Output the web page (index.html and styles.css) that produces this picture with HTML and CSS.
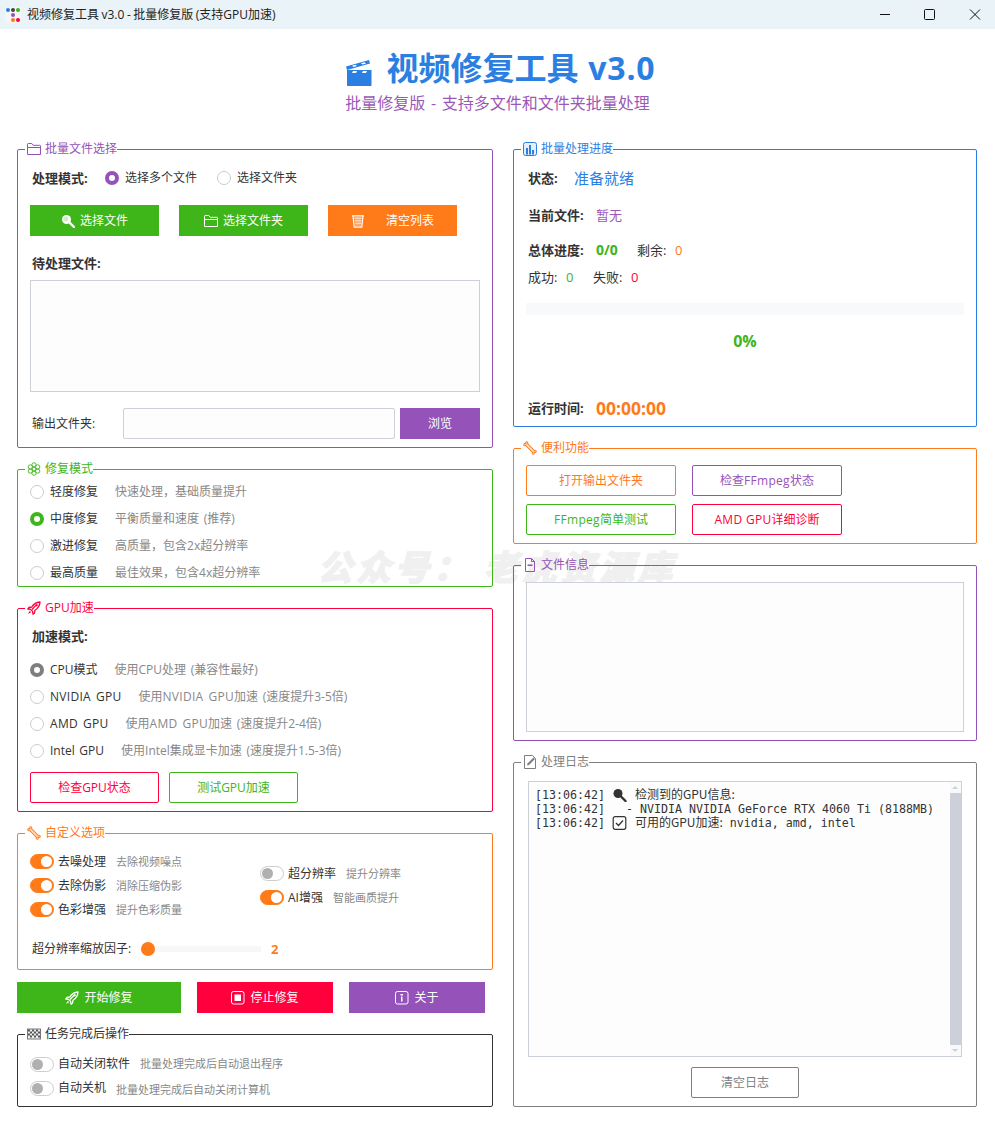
FILE: index.html
```html
<!DOCTYPE html>
<html lang="zh-CN">
<head>
<meta charset="utf-8">
<title>视频修复工具 v3.0</title>
<link rel="stylesheet" href="styles.css">
</head>
<body>
<svg class="sprite" aria-hidden="true">
  <symbol id="i-folder" viewBox="0 0 14 14"><path d="M.5 12.500V2.200c0-.4.3-.7.7-.7h3.600l1.400 1.800h6.600c.4 0 .7.3.7.7v8.500zM.5 5.500h13" fill="none" stroke="currentColor"/></symbol>
  <symbol id="i-chart" viewBox="0 0 14 14"><rect x=".5" y=".5" width="13" height="13" rx="2" fill="currentColor" fill-opacity=".12" stroke="currentColor"/><path d="M3 6h2v6.500H3zM6 3h2v9.500H6zM9 8h2v4.500H9z" fill="currentColor"/></symbol>
  <symbol id="i-wrench" viewBox="0 0 14 14"><g fill="currentColor"><circle cx="1.900" cy="3.700" r="1.600"/><circle cx="3.700" cy="1.900" r="1.600"/><circle cx="10.300" cy="12.100" r="1.600"/><circle cx="12.100" cy="10.300" r="1.600"/></g><path d="M2.800 2.800 11.200 11.200" stroke="currentColor" stroke-width="3.600"/><g fill="#fff" fill-opacity=".8"><circle cx="2" cy="3.700" r=".7"/><circle cx="3.700" cy="2" r=".7"/><circle cx="10.300" cy="12" r=".7"/><circle cx="12" cy="10.300" r=".7"/></g><path d="M3.400 3.400 10.600 10.600" stroke="#fff" stroke-width="1.500" stroke-opacity=".8"/></symbol>
  <symbol id="i-gear" viewBox="0 0 14 14"><g fill="none" stroke="currentColor" stroke-width=".9"><circle cx="7" cy="7" r="1.900"/><circle cx="7" cy="2.800" r="2.100"/><circle cx="7" cy="11.200" r="2.100"/><circle cx="3.300" cy="4.900" r="2.100"/><circle cx="10.700" cy="4.900" r="2.100"/><circle cx="3.300" cy="9.100" r="2.100"/><circle cx="10.700" cy="9.100" r="2.100"/></g></symbol>
  <symbol id="i-rocket" viewBox="0 0 14 14"><path d="M13 1C9.500 1.200 6.800 2.800 4.800 6L2 6.500.8 8l2.800.4 2 2 .4 2.800 1.500-1.200.5-2.800C11.200 7.200 12.800 4.500 13 1z" fill="none" stroke="currentColor" stroke-width="1.300" stroke-linejoin="round"/><path d="M4.500 8 9 3.500l1.500 0-5 5.500z" fill="currentColor"/><circle cx="9.700" cy="4.300" r="1.100" fill="currentColor"/><path d="M2.800 9.800 1 13l3.200-1.800z" fill="currentColor"/></symbol>
  <symbol id="i-doc" viewBox="0 0 14 14"><path d="M2.500.5h6l3 3v10h-9zM8.500.5v3h3" fill="none" stroke="currentColor"/><path d="M4.500 6.500h5v1.500h-5z" fill="currentColor"/></symbol>
  <symbol id="i-memo" viewBox="0 0 14 14"><path d="M1.500 13.500V.5h8l3 3v10z" fill="none" stroke="currentColor"/><path d="M4 10.500l.5-2 6-6 1.500 1.500-6 6z" fill="currentColor"/></symbol>
  <symbol id="i-flag" viewBox="0 0 14 14"><rect x=".5" y="2" width="13" height="10" fill="#eee" stroke="#777"/><path d="M1 2.500h2v2H1zM5 2.500h2v2H5zM9 2.500h2v2H9zM3 4.500h2v2H3zM7 4.500h2v2H7zM11 4.500h2v2h-2zM1 6.500h2v2H1zM5 6.500h2v2H5zM9 6.500h2v2H9zM3 8.500h2v2H3zM7 8.500h2v2H7zM11 8.500h2v2h-2z" fill="#555"/></symbol>
  <symbol id="i-search" viewBox="0 0 14 14"><circle cx="5.500" cy="5.500" r="4.500" fill="currentColor"/><circle cx="5" cy="5" r="2.400" fill="currentColor" fill-opacity=".45"/><path d="M8.500 8.500 13 13" stroke="currentColor" stroke-width="2.400" stroke-linecap="round"/></symbol>
  <symbol id="i-lens" viewBox="0 0 14 14"><circle cx="5.500" cy="5.500" r="4.500" fill="#fff"/><circle cx="5" cy="5" r="2.400" fill="#cfeec4"/><path d="M8.500 8.500 13 13" stroke="#fff" stroke-width="2.400" stroke-linecap="round"/></symbol>
  <symbol id="i-trash" viewBox="0 0 14 14"><path d="M1 1.800h12M2 1.800l1.200 11.400h7.600L12 1.800" fill="none" stroke="currentColor" stroke-width="1.200"/><path d="M3 4.300h8M3.300 6.800h7.400M3.500 9.300h7M5 3v9.500M7 3v9.500M9 3v9.500" stroke="currentColor" stroke-width=".7"/></symbol>
  <symbol id="i-stop" viewBox="0 0 14 14"><rect x=".5" y=".5" width="12.500" height="12.500" rx="2" fill="none" stroke="currentColor"/><rect x="3.500" y="3.500" width="6.500" height="6.500" fill="currentColor"/></symbol>
  <symbol id="i-info" viewBox="0 0 14 14"><rect x=".5" y=".5" width="12.500" height="12.500" rx="2" fill="none" stroke="currentColor"/><path d="M5.500 3h2.500v1.500H5.500zM6 5.500h1.500v5H6z" fill="currentColor"/></symbol>
  <symbol id="i-check" viewBox="0 0 14 14"><rect x=".7" y=".7" width="12.600" height="12.600" rx="2" fill="none" stroke="#333" stroke-width="1.200"/><path d="M3.500 7l2.500 2.500 4.500-5" fill="none" stroke="#333" stroke-width="1.300"/></symbol>
</svg>

<header class="titlebar">
  <svg class="app-icon" viewBox="0 0 16 16"><rect width="16" height="16" rx="1" fill="#f4f6f8"/><circle cx="3" cy="3" r="2" fill="#2b7fe3"/><circle cx="8" cy="3" r="2" fill="#444"/><circle cx="13" cy="3" r="2" fill="#3eb518"/><circle cx="8" cy="8" r="2" fill="#9553b9"/><circle cx="8" cy="13" r="2" fill="#ff7a18"/><circle cx="13" cy="13" r="2" fill="#ff003c"/></svg>
  <span class="title-text">视频修复工具 v3.0 - 批量修复版 (支持GPU加速)</span>
  <div class="win-controls">
    <svg class="win-btn min" viewBox="0 0 12 12"><path d="M0 5.500h10" stroke="#111" fill="none"/></svg>
    <svg class="win-btn" viewBox="0 0 12 12"><rect x=".5" y=".5" width="10" height="10" rx="1" stroke="#111" fill="none"/></svg>
    <svg class="win-btn" viewBox="0 0 12 12"><path d="M1 .5l10 10M11 .5 1 10.500" stroke="#111" fill="none"/></svg>
  </div>
</header>

<div class="hero">
  <h1 class="hero-title">
    <svg class="clapper" viewBox="0 0 26 26"><path d="M1 10h24.500v15c0 .6-.4 1-1 1H2c-.6 0-1-.4-1-1z" fill="#2b7fe3"/><path d="M7 11h4l-1 2H6zM17 11h4l-1 2h-4z" fill="#fff"/><path d="M0 6.500 23 0l1 3.500L1 10z" fill="#2b7fe3"/><path d="M6 5.800 9.500 4.800 11 6l-3.500 1zM15 3.300 18.500 2.300 20 3.500l-3.500 1z" fill="#fff"/></svg>
    <span>视频修复工具 <span class="ver">v3.0</span></span>
  </h1>
  <p class="hero-sub">批量修复版 - 支持多文件和文件夹批量处理</p>
</div>

<main class="columns">
  <div class="col">
    <fieldset class="box purple box-files">
      <legend><svg class="lg-icon"><use href="#i-folder"/></svg>批量文件选择</legend>
      <div class="row mode-row">
        <b class="strong">处理模式:</b>
        <label class="radio-item"><i class="radio on-purple"></i>选择多个文件</label>
        <label class="radio-item"><i class="radio"></i>选择文件夹</label>
      </div>
      <div class="row btn-row">
        <button class="btn solid green"><svg class="b-icon"><use href="#i-lens"/></svg>选择文件</button>
        <button class="btn solid green"><svg class="b-icon"><use href="#i-folder"/></svg>选择文件夹</button>
        <button class="btn solid orange wide-icon"><svg class="b-icon"><use href="#i-trash"/></svg>清空列表</button>
      </div>
      <div class="strong pending">待处理文件:</div>
      <div class="area area-files"></div>
      <div class="row out-row">
        <span class="out-label">输出文件夹:</span>
        <div class="input"></div>
        <button class="btn solid purple-bg browse">浏览</button>
      </div>
    </fieldset>

    <fieldset class="box green-line box-mode">
      <legend><svg class="lg-icon"><use href="#i-gear"/></svg>修复模式</legend>
      <div class="opt"><i class="radio"></i><span>轻度修复</span><em>快速处理，基础质量提升</em></div>
      <div class="opt"><i class="radio on-green"></i><span>中度修复</span><em>平衡质量和速度 (推荐)</em></div>
      <div class="opt"><i class="radio"></i><span>激进修复</span><em>高质量，包含2x超分辨率</em></div>
      <div class="opt"><i class="radio"></i><span>最高质量</span><em>最佳效果，包含4x超分辨率</em></div>
    </fieldset>

    <fieldset class="box red-line box-gpu">
      <legend><svg class="lg-icon"><use href="#i-rocket"/></svg><span>GPU加速</span></legend>
      <div class="strong gpu-head">加速模式:</div>
      <div class="gpu-list">
        <div class="opt"><i class="radio on-gray"></i><span>CPU模式</span><em>使用CPU处理 (兼容性最好)</em></div>
        <div class="opt"><i class="radio"></i><span class="lat">NVIDIA GPU</span><em>使用<span class="lat">NVIDIA GPU</span>加速 (速度提升3-5倍)</em></div>
        <div class="opt"><i class="radio"></i><span class="lat">AMD GPU</span><em>使用<span class="lat">AMD GPU</span>加速 (速度提升2-4倍)</em></div>
        <div class="opt"><i class="radio"></i><span>Intel GPU</span><em>使用Intel集成显卡加速 (速度提升1.5-3倍)</em></div>
      </div>
      <div class="row gpu-btns">
        <button class="btn line red-line">检查GPU状态</button>
        <button class="btn line green-line">测试GPU加速</button>
      </div>
    </fieldset>

    <fieldset class="box orange-line box-custom">
      <legend><svg class="lg-icon"><use href="#i-wrench"/></svg>自定义选项</legend>
      <div class="custom-grid">
        <div class="tg-col">
          <div class="tg"><i class="toggle on"></i><span>去噪处理</span><em>去除视频噪点</em></div>
          <div class="tg"><i class="toggle on"></i><span>去除伪影</span><em>消除压缩伪影</em></div>
          <div class="tg"><i class="toggle on"></i><span>色彩增强</span><em>提升色彩质量</em></div>
        </div>
        <div class="tg-col tg-center">
          <div class="tg"><i class="toggle"></i><span>超分辨率</span><em>提升分辨率</em></div>
          <div class="tg"><i class="toggle on"></i><span>AI增强</span><em>智能画质提升</em></div>
        </div>
      </div>
      <div class="row slider-row">
        <span class="slider-label">超分辨率缩放因子:</span>
        <div class="slider"><i class="thumb"></i></div>
        <b class="slider-val">2</b>
      </div>
    </fieldset>

    <div class="actions">
      <button class="btn solid green act-start"><svg class="b-icon"><use href="#i-rocket"/></svg>开始修复</button>
      <button class="btn solid red act"><svg class="b-icon"><use href="#i-stop"/></svg>停止修复</button>
      <button class="btn solid purple-bg act"><svg class="b-icon"><use href="#i-info"/></svg>关于</button>
    </div>

    <fieldset class="box dark box-after">
      <legend><svg class="lg-icon"><use href="#i-flag"/></svg>任务完成后操作</legend>
      <div class="tg"><i class="toggle"></i><span>自动关闭软件</span><em>批量处理完成后自动退出程序</em></div>
      <div class="tg"><i class="toggle"></i><span>自动关机</span><em>批量处理完成后自动关闭计算机</em></div>
    </fieldset>
  </div>

  <div class="col">
    <fieldset class="box blue box-progress">
      <legend><svg class="lg-icon"><use href="#i-chart"/></svg>批量处理进度</legend>
      <div class="row p-status"><b class="strong">状态:</b><span class="status-val">准备就绪</span></div>
      <div class="row p-file"><b class="strong">当前文件:</b><span class="file-val">暂无</span></div>
      <div class="row p-total"><b class="strong">总体进度:</b><b class="total-val">0/0</b><span class="left-label">剩余:</span><span class="left-val">0</span></div>
      <div class="row p-done"><span>成功:</span><span class="ok-val">0</span><span class="fail-label">失败:</span><span class="fail-val">0</span></div>
      <div class="track"></div>
      <div class="percent">0%</div>
      <div class="row p-time"><b class="strong">运行时间:</b><b class="time-val">00:00:00</b></div>
    </fieldset>

    <fieldset class="box orange-line box-tools">
      <legend><svg class="lg-icon"><use href="#i-wrench"/></svg>便利功能</legend>
      <div class="tools-grid">
        <button class="btn line orange-line">打开输出文件夹</button>
        <button class="btn line purple"><span>检查<span class="lat">FFmpeg</span>状态</span></button>
        <button class="btn line green-line"><span><span class="lat">FFmpeg</span>简单测试</span></button>
        <button class="btn line red-line"><span><span class="lat">AMD GPU</span>详细诊断</span></button>
      </div>
    </fieldset>

    <fieldset class="box purple box-info">
      <legend><svg class="lg-icon"><use href="#i-doc"/></svg>文件信息</legend>
      <div class="area area-info"></div>
    </fieldset>

    <fieldset class="box gray box-log">
      <legend><svg class="lg-icon"><use href="#i-memo"/></svg>处理日志</legend>
      <div class="log">
        <div class="log-text">
          <div class="log-line">[13:06:42] <svg class="log-icon"><use href="#i-search"/></svg> <span class="cjk">检测到的GPU信息:</span></div>
          <div class="log-line">[13:06:42]   - NVIDIA NVIDIA GeForce RTX 4060 Ti (8188MB)</div>
          <div class="log-line">[13:06:42] <svg class="log-icon"><use href="#i-check"/></svg> <span class="cjk">可用的GPU加速:</span> nvidia, amd, intel</div>
        </div>
        <div class="scrollbar">
          <span class="arrow up"></span>
          <span class="scroll-thumb"></span>
          <span class="arrow down"></span>
        </div>
      </div>
      <button class="btn line gray clear-log">清空日志</button>
    </fieldset>
  </div>
</main>

<div class="watermark">公众号： 老虎资源库</div>
</body>
</html>
```
FILE: styles.css
```css
* { box-sizing: border-box; }
html, body { margin: 0; height: 100%; overflow: hidden; }
body {
  width: 995px; height: 1128px; position: relative; background: #fff; color: #333;
  font-family: "Open Sans", "Noto Sans CJK SC", sans-serif; font-size: 12px; line-height: 20px; word-spacing: 1.5px;
}
.sprite { display: none; }
em { font-style: normal; }
i { display: block; }
.lat { letter-spacing: .3px; }

.titlebar { height: 29px; background: #e9f3f8; display: flex; align-items: center; padding-left: 5px; color: #222; word-spacing: -.6px; }
.app-icon { width: 16px; height: 16px; }
.title-text { margin-left: 6px; }
.win-controls { margin-left: auto; display: flex; }
.win-btn { width: 12px; height: 12px; margin-right: 33px; }
.win-btn.min { margin-right: 32px; }
.win-btn:last-child { margin-right: 14px; }

.hero { height: 112px; padding-top: 19px; text-align: center; }
.hero-title {
  margin: 0; height: 40px; display: flex; justify-content: center; align-items: center; gap: 15px;
  color: #2b7fe3; font-size: 32px; line-height: 40px; font-weight: 700; padding-left: 6px;
}
.ver { letter-spacing: .8px; }
.clapper { width: 26px; height: 26px; margin-top: 9px; }
.hero-sub { margin: 3px 0 0; color: #9b59b6; font-size: 16px; line-height: 24px; }

.columns { display: grid; grid-template-columns: 476px 464px; gap: 20px; padding-left: 17px; }
.col { display: flex; flex-direction: column; gap: 13px; }

.box { margin: 0; padding: 0 12px 8px; border: 1px solid; border-radius: 2px; min-width: 0; }
.box legend { margin-left: -5px; padding: 0 0 0 2px; height: 16px; line-height: 16px; display: flex; align-items: center; gap: 4px; }
.lg-icon { width: 14px; height: 14px; flex: none; }
.box.purple { border-color: #9553b9; } .box.purple legend { color: #9553b9; }
.box.green-line { border-color: #3eb518; } .box.green-line legend { color: #3eb518; }
.box.red-line { border-color: #ff003c; } .box.red-line legend { color: #ff003c; }
.box.orange-line { border-color: #ff7a18; } .box.orange-line legend { color: #ff7a18; }
.box.blue { border-color: #2b7fe3; } .box.blue legend { color: #2b7fe3; }
.box.dark { border-color: #333; } .box.dark legend { color: #333; }
.box.gray { border-color: #7f7f7f; } .box.gray legend { color: #7f7f7f; }

.row { display: flex; align-items: center; }
.strong { font-weight: 700; font-size: 13px; line-height: 20px; color: #333; }

.radio { width: 14px; height: 14px; flex: none; border-radius: 50%; border: 1px solid #ccc; background: #fff; }
.radio.on-purple { border: 4px solid #9553b9; }
.radio.on-green { border: 4px solid #3eb518; }
.radio.on-gray { border: 4px solid #7f7f7f; }

.btn { height: 31px; padding: 0; border: 0; font: inherit; display: inline-flex; align-items: center; justify-content: center; gap: 5px; background: none; }
.btn.solid { width: 129px; color: #fff; }
.btn.green { background: #3eb518; }
.btn.orange { background: #ff7a18; }
.btn.red { background: #ff003c; }
.btn.purple-bg { background: #9553b9; }
.btn.wide-icon { gap: 21px; }
.btn.line { border: 1px solid; border-radius: 2px; background: #fff; }
.btn.line.red-line { color: #ff003c; border-color: #ff003c; }
.btn.line.green-line { color: #3eb518; border-color: #3eb518; }
.btn.line.orange-line { color: #ff7a18; border-color: #ff7a18; }
.btn.line.purple { color: #9553b9; border-color: #9553b9; }
.btn.line.gray { color: #7f7f7f; border-color: #7f7f7f; }
.b-icon { width: 14px; height: 14px; flex: none; }

.area { border: 1px solid #ccd0d8; background: #fdfdfd; }

/* file box */
.mode-row { margin-top: 11px; padding-left: 2px; }
.radio-item { display: flex; align-items: center; gap: 6px; margin-right: 20px; }
.mode-row .strong { width: 73px; }
.btn-row { margin-top: 17px; gap: 20px; }
.pending { margin: 17px 0 0 2px; }
.area-files { height: 112px; margin-top: 7px; }
.out-row { margin-top: 16px; }
.out-label { width: 93px; padding-left: 2px; }
.input { width: 272px; height: 31px; border: 1px solid #ccd0d8; border-radius: 2px; background: #fdfdfd; }
.browse.btn { width: 80px; margin-left: 5px; }

/* options */
.opt { display: flex; align-items: center; height: 20px; }
.opt .radio { margin-right: 6px; }
.opt em { color: #888; margin-left: 17px; }
.box-mode { padding-bottom: 3px; }
.box-mode .opt + .opt { margin-top: 7px; }
.box-mode .opt:first-of-type { margin-top: 5px; }
.gpu-head { margin: 10px 0 0 2px; }
.gpu-list { margin-top: 14px; display: flex; flex-direction: column; gap: 7px; }
.gpu-btns { margin-top: 11px; gap: 10px; }
.gpu-btns .btn { width: 129px; }

/* toggles */
.toggle { width: 24px; height: 15px; flex: none; border-radius: 8px; border: 1px solid #ccc; background: #fff; position: relative; }
.toggle::after { content: ""; position: absolute; left: 1px; top: 1px; width: 11px; height: 11px; border-radius: 50%; background: #b0b0b0; }
.toggle.on { background: #ff7a18; border-color: #ff7a18; }
.toggle.on::after { left: auto; right: 1px; background: #fff; }
.tg { display: flex; align-items: center; height: 20px; }
.tg .toggle { margin-right: 4px; }
.tg em { color: #888; font-size: 11px; margin-left: 10px; }
.custom-grid { display: grid; grid-template-columns: 230px 1fr; margin-top: 10px; }
.custom-grid .tg span, .custom-grid .tg em { margin-top: 2px; }
.tg-col { display: flex; flex-direction: column; gap: 4px; }
.tg-center { justify-content: center; }
.slider-row { margin-top: 20px; padding-left: 2px; padding-bottom: 2px; }
.slider-label { width: 109px; }
.slider { width: 120px; height: 6px; background: #f6f7f9; position: relative; }
.thumb { position: absolute; left: 0; top: -4px; width: 14px; height: 14px; border-radius: 50%; background: #ff7a18; }
.slider-val { color: #ff7a18; margin-left: 10px; font-size: 13px; }
.actions { display: flex; gap: 16px; margin-top: -1px; }
.actions .btn { width: 136px; }
.actions .btn.act-start { width: 164px; }
.box-after .tg:first-of-type { margin-top: 12px; }
.box-after .tg + .tg { margin-top: 4px; }
.box-after .tg + .tg em { margin-top: 3px; }

/* progress */
.p-status { margin-top: 11px; padding-left: 2px; }
.p-status .strong { width: 46px; }
.status-val { color: #2b7fe3; font-size: 15px; }
.p-file { margin-top: 17px; padding-left: 2px; }
.p-file .strong { width: 68px; }
.file-val { color: #9b59b6; font-size: 13px; }
.p-total { margin-top: 15px; padding-left: 2px; }
.p-total .strong { width: 68px; }
.total-val { color: #3eb518; font-size: 14px; width: 41px; }
.left-label { font-size: 13px; width: 38px; }
.left-val { color: #ff7a18; font-size: 13px; }
.p-done { margin-top: 7px; padding-left: 2px; font-size: 13px; }
.p-done span:first-child { width: 38px; }
.ok-val { color: #3eb518; width: 27px; }
.fail-label { width: 38px; }
.fail-val { color: #ff003c; }
.track { margin-top: 16px; height: 12px; background: #f8f9fa; }
.percent { margin-top: 16px; text-align: center; color: #3eb518; font-size: 16px; font-weight: 700; }
.p-time { margin-top: 47px; padding-left: 2px; }
.p-time .strong { width: 68px; }
.time-val { color: #ff7a18; font-size: 17.5px; }
.box-progress { padding-bottom: 8px; }

.tools-grid { display: grid; grid-template-columns: 150px 150px; gap: 8px 16px; margin-top: 9px; }
.area-info { height: 150px; margin-top: 9px; }

/* log */
.log { margin: 11px 0 0 2px; width: 434px; height: 276px; border: 1px solid #ccd0d8; background: #fdfdfd; display: flex; }
.log-text { flex: 1; padding: 6px 0 0 6px; font-family: "DejaVu Sans Mono", monospace; font-size: 11.63px; line-height: 14px; color: #333; word-spacing: 0; }
.log-line { white-space: pre; height: 14px; }
.cjk { font-family: "Noto Sans CJK SC", sans-serif; font-size: 12px; line-height: 0; margin-left: 1px; }
.log-icon { width: 15px; height: 14px; vertical-align: top; }
.scrollbar { width: 11px; display: flex; flex-direction: column; background: #f8f9fa; }
.arrow { height: 11px; flex: none; position: relative; }
.arrow::after { content: ""; position: absolute; left: 2px; width: 0; height: 0; border-left: 3px solid transparent; border-right: 3px solid transparent; }
.arrow.up::after { top: 4px; border-bottom: 3px solid #ccd0d8; }
.arrow.down::after { top: 4px; border-top: 3px solid #ccd0d8; }
.scroll-thumb { flex: 1; background: #ccd0d8; }
.clear-log.btn { display: flex; width: 108px; margin: 10px 0 0 165px; }

.watermark {
  position: absolute; z-index: -1; left: 318px; top: 543px; white-space: nowrap;
  color: #f0f0f0; font-family: "Noto Sans CJK SC", sans-serif; font-size: 34px; line-height: 46px;
  font-weight: 700; font-style: italic; letter-spacing: 4.5px; word-spacing: 0; -webkit-text-stroke: 2px #f0f0f0;
}
```
